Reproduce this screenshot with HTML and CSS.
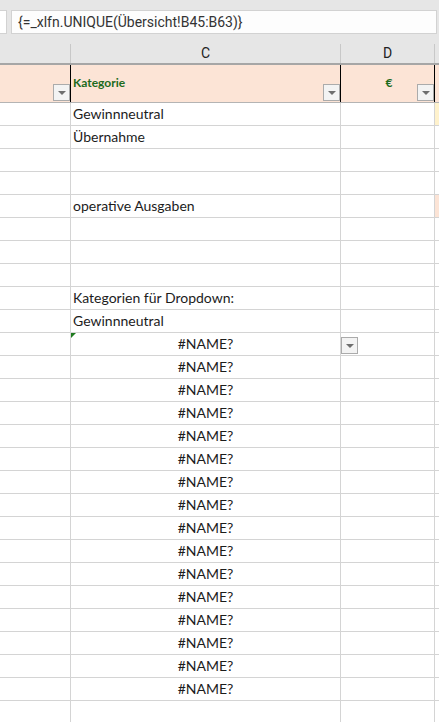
FILE: index.html
```html
<!DOCTYPE html>
<html lang="de">
<head>
<meta charset="utf-8">
<title>Kategorien</title>
<link rel="stylesheet" href="styles.css">
</head>
<body>
<div class="app">
  <div class="toolbar">
    <div class="namebox"></div>
    <div class="formula">{=_xlfn.UNIQUE(Übersicht!B45:B63)}</div>
  </div>
  <div class="colheads">
    <div class="ch cb"></div>
    <div class="ch cc">C</div>
    <div class="ch cd">D</div>
    <div class="ch ce"></div>
  </div>
  <div class="hrow">
    <div class="hc cb"><span class="dd"></span></div>
    <div class="hc cc"><span class="htext">Kategorie</span><span class="dd"></span></div>
    <div class="hc cd"><span class="htext euro">€</span><span class="dd"></span></div>
    <div class="hc ce"></div>
  </div>
  <div class="row"><div class="cell cb"></div><div class="cell cc">Gewinnneutral</div><div class="cell cd"></div><div class="cell ce yellow"></div></div>
  <div class="row"><div class="cell cb"></div><div class="cell cc">Übernahme</div><div class="cell cd"></div><div class="cell ce"></div></div>
  <div class="row"><div class="cell cb"></div><div class="cell cc"></div><div class="cell cd"></div><div class="cell ce"></div></div>
  <div class="row"><div class="cell cb"></div><div class="cell cc"></div><div class="cell cd"></div><div class="cell ce"></div></div>
  <div class="row"><div class="cell cb"></div><div class="cell cc">operative Ausgaben</div><div class="cell cd"></div><div class="cell ce peach"></div></div>
  <div class="row"><div class="cell cb"></div><div class="cell cc"></div><div class="cell cd"></div><div class="cell ce"></div></div>
  <div class="row"><div class="cell cb"></div><div class="cell cc"></div><div class="cell cd"></div><div class="cell ce"></div></div>
  <div class="row"><div class="cell cb"></div><div class="cell cc"></div><div class="cell cd"></div><div class="cell ce"></div></div>
  <div class="row"><div class="cell cb"></div><div class="cell cc">Kategorien für Dropdown:</div><div class="cell cd"></div><div class="cell ce"></div></div>
  <div class="row"><div class="cell cb"></div><div class="cell cc">Gewinnneutral</div><div class="cell cd"></div><div class="cell ce"></div></div>
  <div class="row"><div class="cell cb"></div><div class="cell cc center"><span class="tri"></span>#NAME?</div><div class="cell cd"><span class="dd dd-cell"></span></div><div class="cell ce"></div></div>
  <div class="row"><div class="cell cb"></div><div class="cell cc center">#NAME?</div><div class="cell cd"></div><div class="cell ce"></div></div>
  <div class="row"><div class="cell cb"></div><div class="cell cc center">#NAME?</div><div class="cell cd"></div><div class="cell ce"></div></div>
  <div class="row"><div class="cell cb"></div><div class="cell cc center">#NAME?</div><div class="cell cd"></div><div class="cell ce"></div></div>
  <div class="row"><div class="cell cb"></div><div class="cell cc center">#NAME?</div><div class="cell cd"></div><div class="cell ce"></div></div>
  <div class="row"><div class="cell cb"></div><div class="cell cc center">#NAME?</div><div class="cell cd"></div><div class="cell ce"></div></div>
  <div class="row"><div class="cell cb"></div><div class="cell cc center">#NAME?</div><div class="cell cd"></div><div class="cell ce"></div></div>
  <div class="row"><div class="cell cb"></div><div class="cell cc center">#NAME?</div><div class="cell cd"></div><div class="cell ce"></div></div>
  <div class="row"><div class="cell cb"></div><div class="cell cc center">#NAME?</div><div class="cell cd"></div><div class="cell ce"></div></div>
  <div class="row"><div class="cell cb"></div><div class="cell cc center">#NAME?</div><div class="cell cd"></div><div class="cell ce"></div></div>
  <div class="row"><div class="cell cb"></div><div class="cell cc center">#NAME?</div><div class="cell cd"></div><div class="cell ce"></div></div>
  <div class="row"><div class="cell cb"></div><div class="cell cc center">#NAME?</div><div class="cell cd"></div><div class="cell ce"></div></div>
  <div class="row"><div class="cell cb"></div><div class="cell cc center">#NAME?</div><div class="cell cd"></div><div class="cell ce"></div></div>
  <div class="row"><div class="cell cb"></div><div class="cell cc center">#NAME?</div><div class="cell cd"></div><div class="cell ce"></div></div>
  <div class="row"><div class="cell cb"></div><div class="cell cc center">#NAME?</div><div class="cell cd"></div><div class="cell ce"></div></div>
  <div class="row"><div class="cell cb"></div><div class="cell cc center">#NAME?</div><div class="cell cd"></div><div class="cell ce"></div></div>
  <div class="row"><div class="cell cb"></div><div class="cell cc"></div><div class="cell cd"></div><div class="cell ce"></div></div>
</div>
</body>
</html>
```

FILE: styles.css
```css
* { box-sizing: border-box; }
html, body { margin: 0; padding: 0; background: #ffffff; }
body { width: 439px; height: 722px; overflow: hidden; }

.app {
  width: 439px;
  font-family: Lato, "Open Sans", sans-serif;
  color: #1c1c1c;
}

.toolbar {
  display: flex;
  gap: 4px;
  height: 34px;
  padding-top: 10px;
  background: #e6e6e6;
}
.namebox {
  width: 7px;
  background: #ffffff;
  border: 1px solid #d2d2d2;
  border-left: none;
}
.formula {
  flex: 1;
  margin-right: 2px;
  background: #fdfdfd;
  border: 1px solid #d2d2d2;
  font-family: Roboto, "Noto Sans", sans-serif;
  font-size: 14px;
  line-height: 22px;
  padding-left: 6px;
  color: #333333;
}

.colheads {
  display: flex;
  height: 31px;
  padding-top: 10px;
  background: #e6e6e6;
  border-bottom: 2px solid #a6a6a6;
}
.ch {
  height: 19px;
  border-right: 1px solid #c8c8c8;
  font-family: Roboto, "Noto Sans", sans-serif;
  font-size: 14px;
  line-height: 19px;
  text-align: center;
  color: #222222;
}

.cb { width: 71px; flex: none; }
.cc { width: 270px; flex: none; }
.cd { width: 94px; flex: none; }
.ce { flex: 1; border-right: none !important; }

.hrow {
  display: flex;
  height: 38px;
  background: #fce4d6;
  border-bottom: 1px solid #b4b4b4;
}
.hc {
  display: flex;
  align-items: center;
  justify-content: space-between;
  border-right: 1px solid #000000;
  padding-left: 2px;
}
.hc.cd { justify-content: flex-end; }
.htext {
  font-weight: 700;
  font-size: 12px;
  color: #1d6b1d;
  margin-top: -2px;
}
.euro {
  flex: 1;
  text-align: center;
  padding-left: 18px;
  font-size: 12px;
}
.hc .dd {
  align-self: flex-end;
  margin-left: auto;
  margin-bottom: 1px;
}
.hc.cd .dd { margin-left: 0; }

.dd {
  position: relative;
  display: block;
  width: 17px;
  height: 17px;
  background: #f3f3f3;
  border: 1px solid #ababab;
}
.dd::after {
  content: "";
  position: absolute;
  left: 4px;
  top: 6px;
  border-left: 4px solid transparent;
  border-right: 4px solid transparent;
  border-top: 4px solid #6e6e6e;
}

.row {
  display: flex;
  height: 23px;
  border-bottom: 1px solid #d4d4d4;
}
.cell {
  position: relative;
  border-right: 1px solid #d4d4d4;
  font-size: 14px;
  line-height: 22px;
  white-space: nowrap;
}
.cell.cc { padding-left: 2px; }
.cell.center { text-align: center; padding-left: 0; }
.yellow { background: #fff2cc; }
.peach { background: #fce4d6; }

.tri {
  position: absolute;
  left: 0;
  top: 0;
  border-top: 5px solid #1f7a1f;
  border-right: 5px solid transparent;
}
.dd-cell {
  position: absolute;
  left: 0;
  top: 4px;
}
```
